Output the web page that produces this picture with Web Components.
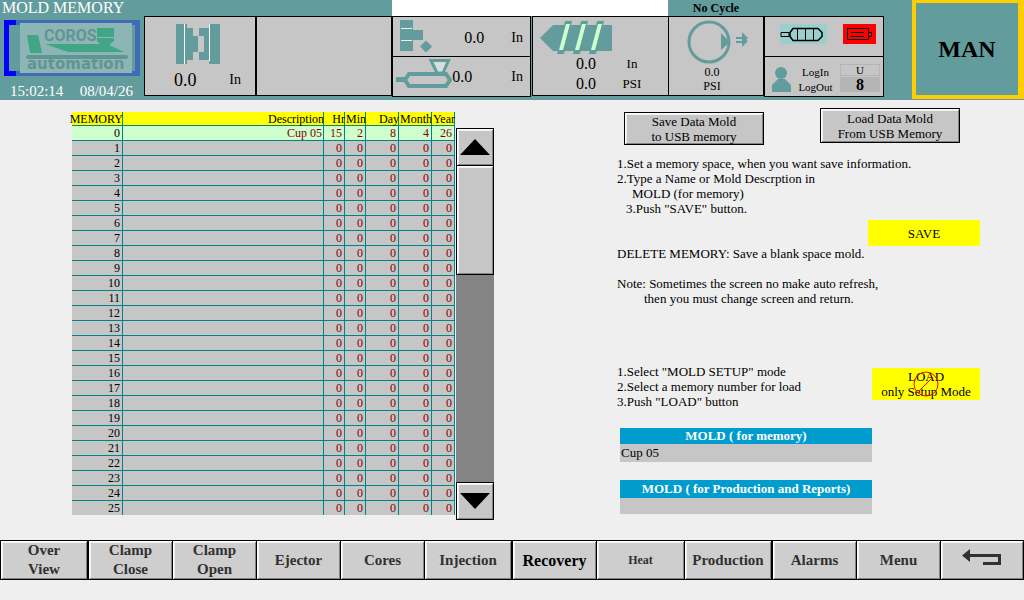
<!DOCTYPE html>
<html lang="en">
<head>
<meta charset="utf-8">
<title>Mold Memory</title>
<style>
  body {
    margin: 0;
    min-height: 100vh;
    background: #efefef;
    color: #000;
    font: 13px/15px "Liberation Serif", "Times New Roman", serif;
    --teal: #639c9c;
    --face: #c6c6c6;
    --grid: #008484;
  }
</style>
</head>
<body>
<mold-screen></mold-screen>
<script>
function define(name, html, setup) {
  const template = document.createElement('template');
  template.innerHTML = html;
  customElements.define(name, class extends HTMLElement {
    constructor() {
      super();
      this.attachShadow({ mode: 'open' }).append(template.content.cloneNode(true));
    }
    connectedCallback() {
      if (setup && !this.ready) { this.ready = true; setup(this, this.shadowRoot); }
    }
  });
}

/* Machine symbols: [width, height, markup] */
const ICONS = {
  logo: [136, 56, `
    <rect x="2.5" y="2.5" width="131" height="51" fill="none" stroke="#426bb5" stroke-width="5"/>
    <path d="M12 2.5H2.5v51H12" fill="none" stroke="#00f" stroke-width="5"/>
    <rect x="16" y="3" width="112" height="50" fill="#8cb5b5"/>
    <path d="M23 15h11l4 18H26zM93 8h17v9H93zM93 18h17v3l-5 4 15 7H64L41 24h55l-3-3z" fill="#42a584"/>
    <rect x="22" y="35" width="102" height="4" rx="2" fill="#639494"/>
    <text x="40" y="21" font-family="Roboto, Arial, sans-serif" font-weight="700" font-size="16" fill="#639494">COROS</text>
    <text x="23" y="49" font-family="DejaVu Sans, sans-serif" font-weight="700" font-size="15" fill="#639494">automation</text>`],
  clamp: [44, 40, `
    <path d="M0 0h11v4h6v8h5v16h-5v8h-6v4H0zM23 4h10V0h11v40H33v-4H23v-8h5V12h-5z" fill="#639c9c"/>
    <path d="M8.500 0v40M33.500 0v37" stroke="#fff"/>`],
  ejector: [32, 32, `
    <path d="M0 0h13v31H0zM0 10h23v10H0zM26 20.500l6 6-6 6-6-6z" fill="#639c9c"/>
    <path d="M1 8.500h11M1 20.500h11" stroke="#efefef"/>`],
  barrel: [56, 30, `
    <path d="M35 1.500h17.500L47 14h-6z" fill="#d6dede" stroke="#639c9c" stroke-width="3"/>
    <path d="M13 15h37l4 6-4 6H13l-4-6z" fill="none" stroke="#639c9c" stroke-width="4"/>
    <path d="M0 18h9v5H0z" fill="#639c9c"/>`],
  screw: [72, 33, `
    <path d="M0 17L13 4h59v26H13z" fill="#639c9c"/>
    <path d="M25 0h7L24 33h-7zM41 0h7l-8 33h-7zM57 0h7l-8 33h-7z" fill="#639c9c"/>
    <path d="M26 3h4l-7 26h-4zM42 3h4l-7 26h-4zM58 3h4l-7 26h-4z" fill="#ceffce"/>`],
  pump: [62, 44, `
    <circle cx="22" cy="22" r="20" fill="none" stroke="#639c9c" stroke-width="3"/>
    <path d="M34 13l9 9-9 8zM49 17h6v-5l6 6-2 2 2 1-6 6v-4h-6v-2h6v-2h-6z" fill="#639c9c"/>`],
  heater: [48, 20, `
    <rect width="47" height="20" fill="#9ccece"/>
    <path d="M1 8.500h8v4H1z" fill="none" stroke="#000"/>
    <path d="M13 4.500h25l4 4v4l-4 4H13l-3-4v-4z" fill="none" stroke="#000" stroke-width="1.500"/>
    <path d="M17.500 5v11M25.500 5v11M33.500 5v11" stroke="#000"/>`],
  motor: [33, 20, `
    <rect width="33" height="20" fill="#f00"/>
    <path d="M4.500 4.500h21v11h-21zM25.500 8.500h3v4h-3M8 8.500h13M8 12.500h13" fill="none" stroke="#000"/>`],
  user: [19, 26, `
    <circle cx="9" cy="6" r="6" fill="#639c9c"/><path d="M6 12h7l6 6v7H0v-7z" fill="#639c9c"/>`],
  up: [30, 16, `<path d="M15 0l15 16H0z"/>`],
  down: [30, 16, `<path d="M0 0h30L15 16z"/>`],
  back: [40, 22, `<path d="M0 6.500L8 0v5h31v11H21v-3h15V8H8v5z" fill="#313131"/>`],
  no: [26, 26, `<circle cx="13" cy="13" r="12" fill="none" stroke="#f00"/><path d="M6 20L20 6" stroke="#f00"/>`]
};

define('hmi-icon', `<style>:host{display:block;flex:none}svg{display:block}</style>`, (el, root) => {
  const [w, h, body] = ICONS[el.getAttribute('name')];
  root.innerHTML += `<svg width="${w}" height="${h}" viewBox="0 0 ${w} ${h}" aria-hidden="true">${body}</svg>`;
});

define('hmi-panel', `
<style>
  :host { display: flex; flex-direction: column; box-sizing: border-box; border: 1px solid #000; background: var(--face); min-width: 0; }
</style><slot></slot>`);

/* Raised grey push button */
define('hmi-button', `
<style>
  :host { display: block; }
  button {
    display: flex; align-items: center; justify-content: center;
    width: 100%; height: 100%; margin: 0; padding: 0; box-sizing: border-box;
    border: 1px solid #000; border-radius: 0; background: var(--face); color: inherit; font: inherit;
    text-align: center; white-space: pre-line;
    box-shadow: inset 1px 1px #fff, inset -1px -1px #848484, inset 2px 2px #efefef;
  }
</style><button type="button"><slot></slot></button>`, (el, root) => {
  if (el.hasAttribute('label')) root.querySelector('button').setAttribute('aria-label', el.getAttribute('label'));
});

/* Flat yellow command */
define('command-button', `
<style>
  :host { display: block; position: relative; }
  button { width: 100%; height: 100%; padding: 0; border: 0; border-radius: 0; background: #ff0; color: #000; font: inherit; white-space: pre-line; }
  ::slotted(hmi-icon) { position: absolute; left: 50%; top: 50%; transform: translate(-50%, -50%); }
</style><button type="button"><slot></slot></button>`);

define('machine-header', `
<style>
  :host {
    display: grid; height: 100px; background: var(--teal);
    grid-template-columns: 144fr 112fr 136fr 140fr 136fr 96fr 120fr 28fr 112fr;
  }
  .brand { color: #fff; }
  h1 { margin: 0 0 4px 2px; font-size: 16px; line-height: 16px; font-weight: 400; white-space: nowrap; }
  .brand hmi-icon { margin-left: 4px; }
  .clock { display: flex; justify-content: space-between; padding: 7px 11px 0 10px; font-size: 15px; line-height: 17px; }
  .cell { display: flex; flex-direction: column; min-width: 0; }
  .strip { height: 16px; flex: none; text-align: center; font-weight: 700; font-size: 12px; line-height: 16px; }
  .white { background: #fff; }
  .tall { height: 80px; }
  .half { height: 41px; }
  .half + .half { margin-top: -1px; }
  .row { display: flex; align-items: center; justify-content: space-between; }
  .big { font-size: 16px; line-height: 20px; }
  .unit { font-size: 14px; line-height: 20px; }
  .clamp { padding: 7px 0 0 29px; }
  .clamp hmi-icon { margin-left: 2px; }
  .clamp .row { padding: 6px 14px 0 0; }
  .clamp .big { font-size: 18px; }
  .gap { margin-right: 1px; }
  .ejector, .carriage { flex-direction: row; justify-content: space-between; padding-right: 7px; }
  .ejector { padding-left: 7px; padding-top: 3px; }
  .carriage { padding-left: 3px; padding-top: 2px; }
  .values { display: flex; align-items: center; }
  .ejector .values { gap: 27px; height: 36px; }
  .carriage .values { gap: 39px; height: 36px; }
  .screw { border-right: 0; padding: 4px 26px 0 7px; }
  .screw .row { padding-left: 36px; }
  .screw .unit { width: 20px; font-size: 13px; text-align: center; }
  .pump { padding: 3px 0 0 18px; }
  .pump p { margin: 1px 0 0; width: 50px; text-align: center; font-size: 12px; line-height: 14px; }
  .status { flex-direction: row; justify-content: space-between; padding: 7px 7px 0 15px; }
  .access { flex-direction: row; justify-content: space-between; padding: 7px 3px 0 7px; }
  .access hmi-icon { margin-top: 3px; }
  .access button { border: 0; padding: 0; background: none; font: 11px/15px "Liberation Serif", serif; color: #000; }
  .user { width: 40px; text-align: center; font-size: 11px; }
  .user span { display: block; box-sizing: border-box; height: 12px; line-height: 10px; border: 1px solid #b5b5b5; }
  .user strong { display: block; height: 15px; margin-top: 1px; background: #b5b5b5; font-size: 16px; line-height: 15px; }
  .mode { grid-column: 9; height: 99px; box-sizing: border-box; border: 4px solid #ffce00; border-width: 3px 6px 4px 4px; display: flex; align-items: center; justify-content: center; font-size: 24px; font-weight: 700; }
</style>
<div class="brand">
  <h1>MOLD MEMORY</h1>
  <hmi-icon name="logo"></hmi-icon>
  <div class="clock"><span>15:02:14</span><span>08/04/26</span></div>
</div>
<div class="cell"><div class="strip"></div>
  <hmi-panel class="tall clamp"><hmi-icon name="clamp"></hmi-icon>
    <div class="row"><span class="big">0.0</span><span class="unit">In</span></div></hmi-panel></div>
<div class="cell"><div class="strip"></div><hmi-panel class="tall"></hmi-panel></div>
<div class="cell"><div class="strip white"></div>
  <hmi-panel class="half ejector gap"><hmi-icon name="ejector"></hmi-icon>
    <div class="values"><span class="big">0.0</span><span class="unit">In</span></div></hmi-panel>
  <hmi-panel class="half carriage gap"><hmi-icon name="barrel"></hmi-icon>
    <div class="values"><span class="big">0.0</span><span class="unit">In</span></div></hmi-panel></div>
<div class="cell"><div class="strip white"></div>
  <hmi-panel class="tall screw"><hmi-icon name="screw"></hmi-icon>
    <div class="row"><span class="big">0.0</span><span class="unit">In</span></div>
    <div class="row"><span class="big">0.0</span><span class="unit">PSI</span></div></hmi-panel></div>
<div class="cell"><div class="strip">No Cycle</div>
  <hmi-panel class="tall pump"><hmi-icon name="pump"></hmi-icon><p>0.0<br>PSI</p></hmi-panel></div>
<div class="cell"><div class="strip"></div>
  <hmi-panel class="half status"><hmi-icon name="heater"></hmi-icon><hmi-icon name="motor"></hmi-icon></hmi-panel>
  <hmi-panel class="half access"><hmi-icon name="user"></hmi-icon>
    <button type="button">LogIn<br>LogOut</button>
    <div class="user"><span>U</span><strong>8</strong></div></hmi-panel></div>
<div class="mode">MAN</div>`);

define('memory-table', `
<style>
  :host { display: block; }
  table { width: 100%; border-collapse: separate; border-spacing: 0; table-layout: fixed; text-align: right; font-size: 12px; line-height: 14px; }
  th, td { height: 14px; padding: 0 2px 0 0; border: solid var(--grid); border-width: 0 1px 1px 0; background: var(--face); color: #840000; font-weight: 400; white-space: nowrap; }
  thead th { height: 11px; line-height: 11px; padding: 2px 0 0; background: #ff0; color: #000; direction: rtl; }
  tbody th { color: #000; }
  .current > * { background: #ceffce; }
  tbody tr:last-child > * { border-bottom: 0; }
  td:nth-child(2) { padding-right: 1px; }
</style>
<table>
  <colgroup><col style="width:51px"><col><col style="width:21px"><col style="width:21px"><col style="width:33px"><col style="width:33px"><col style="width:23px"></colgroup>
  <thead><tr><th scope="col">MEMORY</th><th scope="col">Description</th><th scope="col">Hr</th><th scope="col">Min</th><th scope="col">Day</th><th scope="col">Month</th><th scope="col">Year</th></tr></thead>
  <tbody></tbody>
</table>`, (el, root) => {
  const saved = { 0: ['Cup 05', 15, 2, 8, 4, 26] };
  const body = root.querySelector('tbody');
  for (let i = 0; i < 26; i++) {
    const cells = saved[i] || ['', 0, 0, 0, 0, 0];
    body.insertAdjacentHTML('beforeend',
      `<tr${i === 0 ? ' class="current"' : ''}><th scope="row">${i}</th>${cells.map(c => `<td>${c}</td>`).join('')}</tr>`);
  }
});

define('list-scroller', `
<style>
  :host { display: flex; flex-direction: column; width: 38px; background: #848484; }
  hmi-button { height: 38px; }
  .thumb { height: 110px; margin-top: -1px; }
  .end { margin-top: auto; }
</style>
<hmi-button label="Scroll up"><hmi-icon name="up"></hmi-icon></hmi-button>
<hmi-button class="thumb" label="Scroll position"></hmi-button>
<hmi-button class="end" label="Scroll down"><hmi-icon name="down"></hmi-icon></hmi-button>`);

define('mold-field', `
<style>
  :host { display: block; }
  label { display: block; height: var(--cap, 16px); line-height: var(--cap, 16px); background: #009cce; color: #fff; font-weight: 700; text-align: center; }
  input { display: block; width: 100%; height: var(--box, 18px); box-sizing: border-box; border: 0; border-radius: 0; padding: 0 1px; background: var(--face); color: #000; font: inherit; }
</style>
<label for="value"><slot></slot></label><input id="value" type="text">`, (el, root) => {
  root.querySelector('input').value = el.getAttribute('value') || '';
});

define('memory-actions', `
<style>
  :host { display: block; }
  p { margin: 0; }
  .usb { display: flex; justify-content: space-between; align-items: flex-start; padding: 0 20px 0 7px; height: 37px; }
  .usb hmi-button { width: 140px; height: 35px; }
  .usb hmi-button:first-child { margin-top: 4px; height: 33px; }
  .steps { margin-top: 11px; white-space: nowrap; }
  .in1 { padding-left: 9px; }
  .in2 { padding-left: 15px; }
  .in3 { padding-left: 27px; }
  .save { width: 112px; height: 26px; margin: 4px 0 0 auto; }
  .note { margin-top: 15px; }
  .load { display: flex; justify-content: space-between; margin-top: 58px; }
  .load command-button { width: 108px; height: 32px; margin-top: 4px; }
  .fields { display: grid; gap: 18px; margin: 19px 108px 0 3px; }
  .fields mold-field + mold-field { --cap: 18px; --box: 16px; }
</style>
<div class="usb">
  <hmi-button>Save Data Mold<br>to USB memory</hmi-button>
  <hmi-button>Load Data Mold<br>From USB Memory</hmi-button>
</div>
<div class="steps">
  <p>1.Set a memory space, when you want save information.</p>
  <p>2.Type a Name or Mold Descrption in</p>
  <p class="in2">MOLD (for memory)</p>
  <p class="in1">3.Push "SAVE" button.</p>
</div>
<command-button class="save">SAVE</command-button>
<p>DELETE MEMORY: Save a blank space mold.</p>
<p class="note">Note: Sometimes the screen no make auto refresh,</p>
<p class="in3">then you must change screen and return.</p>
<div class="load">
  <div><p>1.Select "MOLD SETUP" mode</p><p>2.Select a memory number for load</p><p>3.Push "LOAD" button</p></div>
  <command-button>LOAD<br>only Setup Mode<hmi-icon name="no"></hmi-icon></command-button>
</div>
<div class="fields">
  <mold-field value="Cup 05">MOLD ( for memory)</mold-field>
  <mold-field>MOLD ( for Production and Reports)</mold-field>
</div>`);

define('screen-nav', `
<style>
  :host { display: block; }
  nav { display: grid; height: 40px; grid-template-columns: 88fr 84fr 84fr 84fr 84fr 88fr 84fr 88fr 88fr 84fr 84fr 84fr; }
  hmi-button { --face: #cecece; color: #313131; font-size: 15px; line-height: 19px; font-weight: 700; margin-right: -1px; min-width: 0; }
  .end { margin-right: 0; }
  .here { color: #000; font-size: 16px; }
  .small { font-size: 12px; }
</style>
<nav>
  <hmi-button class="end">Over<br>View</hmi-button>
  <hmi-button>Clamp<br>Close</hmi-button>
  <hmi-button>Clamp<br>Open</hmi-button>
  <hmi-button>Ejector</hmi-button>
  <hmi-button>Cores</hmi-button>
  <hmi-button class="end">Injection</hmi-button>
  <hmi-button class="here">Recovery</hmi-button>
  <hmi-button class="small">Heat</hmi-button>
  <hmi-button class="end">Production</hmi-button>
  <hmi-button>Alarms</hmi-button>
  <hmi-button>Menu</hmi-button>
  <hmi-button class="end" label="Back"><hmi-icon name="back"></hmi-icon></hmi-button>
</nav>`);

define('mold-screen', `
<style>
  :host { display: flex; flex-direction: column; }
  main { display: grid; grid-template-columns: minmax(0, 422fr) minmax(0, 363fr); column-gap: 123px; padding: 8px 44px 20px 72px; }
  .memory { display: flex; padding-top: 4px; }
  memory-table { flex: 1; min-width: 0; margin-right: 1px; }
  list-scroller { margin-top: 16px; height: 392px; }
</style>
<machine-header></machine-header>
<main>
  <div class="memory"><memory-table></memory-table><list-scroller></list-scroller></div>
  <memory-actions></memory-actions>
</main>
<screen-nav></screen-nav>`);
</script>
</body>
</html>
